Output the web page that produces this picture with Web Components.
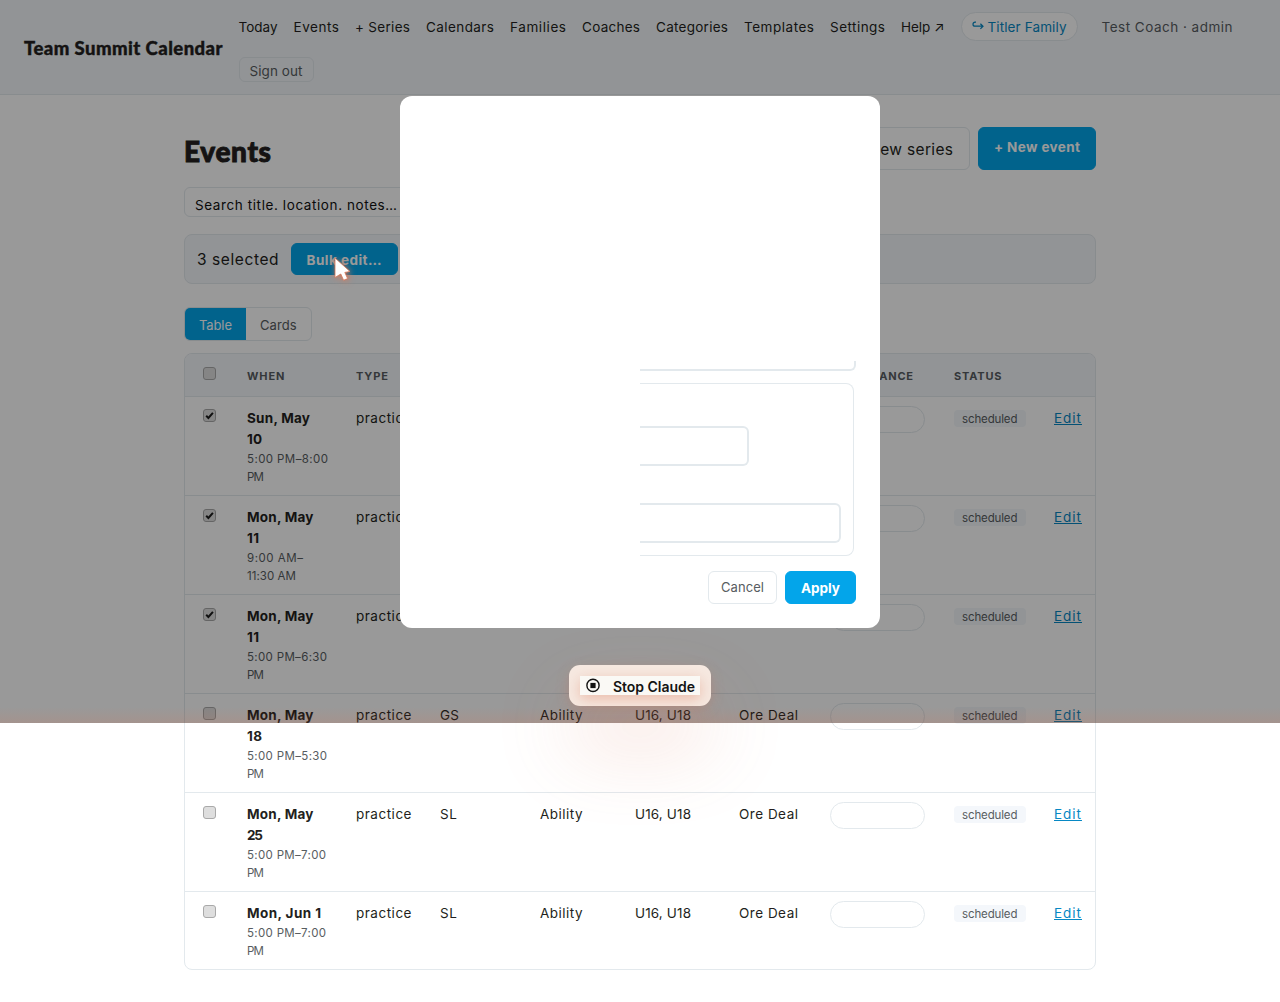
<!DOCTYPE html>
<html lang="en">
<head>
<meta charset="utf-8">
<title>Events</title>
<style>
  html, body {
    margin: 0;
    padding: 0;
    background: #fff;
  }
  body {
    --ink: #231f20;
    --muted: #585d61;
    --line: #e3e9ed;
    --soft: #f4f7fb;
    --blue: #03a5ea;
    --link: #0788c4;
    font: 13.5px/21px Inter, "Liberation Sans", sans-serif;
    color: var(--ink);
  }
</style>
</head>
<body>
<team-app></team-app>

<script>
customElements.define('team-header', class TeamHeader extends HTMLElement {
  constructor() {
    super();
    this.attachShadow({mode: 'open'});
    this.shadowRoot.innerHTML = this.template;
  }
  get template() {
    return `<style>
      :host {
        display: flex;
        align-items: center;
        gap: 16px;
        box-sizing: border-box;
        height: 95px;
        padding: 0 24px;
        background: var(--soft);
        border-bottom: 1px solid var(--line);
      }
      .brand {
        font: 900 18.5px/24px Lato, sans-serif;
        -webkit-text-stroke: .4px currentColor;
        padding-top: 2px;
      }
      nav {
        display: flex;
        flex-wrap: wrap;
        align-items: center;
        row-gap: 16px;
        column-gap: 16px;
        flex: 1;
      }
      nav > fit-text {
        padding-top: 1px;
      }
      .pill {
        box-sizing: border-box;
        width: 117px;
        height: 29px;
        padding: 4px 0 0 10px;
        border: 1px solid var(--line);
        border-radius: 15px;
        background: #fff;
        color: var(--link);
        display: flex;
        gap: 4px;
      }
      .pill svg {
        margin-top: 4px;
      }
      .user {
        margin-left: 8px;
        color: var(--muted);
      }
      .out {
        box-sizing: border-box;
        width: 75px;
        height: 25px;
        padding: 3px 0 0 10px;
        border: 1px solid var(--line);
        border-radius: 6px;
        color: var(--muted);
      }
    </style>
    <fit-text class="brand" width="198.5">Team Summit Calendar</fit-text>
    <nav>
      <fit-text width="39">Today</fit-text>
      <fit-text width="45.5">Events</fit-text>
      <fit-text width="55">+ Series</fit-text>
      <fit-text width="68">Calendars</fit-text>
      <fit-text width="56">Families</fit-text>
      <fit-text width="58">Coaches</fit-text>
      <fit-text width="72">Categories</fit-text>
      <fit-text width="70">Templates</fit-text>
      <fit-text width="55">Settings</fit-text>
      <fit-text width="43.5">Help ↗</fit-text>
      <span class="pill">
        <svg width="12" height="11" viewBox="0 0 12 11" fill="none" stroke="currentColor" stroke-width="1.2"><path d="M4 1.2H3a2 2 0 0 0-2 2v0a2 2 0 0 0 2 2h8M8.4 2.7 11 5.2 8.4 7.8"/></svg>
        <fit-text width="79">Titler Family</fit-text>
      </span>
      <fit-text class="user" width="131">Test Coach · admin</fit-text>
      <span class="out"><fit-text width="53">Sign out</fit-text></span>
    </nav>
    `
  }
});

customElements.define('ui-button', class UiButton extends HTMLElement {
  constructor() {
    super();
    this.attachShadow({mode: 'open'});
    this.shadowRoot.innerHTML = this.template;
  }
  get template() {
    return `<style>
      :host {
        display: flex;
        align-items: center;
        justify-content: center;
        box-sizing: border-box;
        border: 1px solid var(--line);
        border-radius: 6px;
        background: #fff;
        flex: none;
      }
      :host([primary]) {
        background: var(--blue);
        border-color: var(--blue);
        color: #fff;
        font-weight: 700;
      }
    </style>
    <slot></slot>
    `
  }
});

customElements.define('check-box', class CheckBox extends HTMLElement {
  constructor() {
    super();
    this.attachShadow({mode: 'open'});
    this.shadowRoot.innerHTML = this.template;
  }
  get template() {
    return `<style>
      :host {
        display: block;
        box-sizing: border-box;
        width: 13px;
        height: 13px;
        border: 1px solid #a9a9a9;
        border-radius: 3px;
        background: #dedede;
      }
      svg {
        display: none;
      }
      :host([checked]) svg {
        display: block;
      }
    </style>
    <svg width="11" height="11" viewBox="0 0 11 11" fill="none" stroke="#1c1c1c" stroke-width="2"><path d="M2.2 5.8 4.4 8 8.9 2.9"/></svg>
    `
  }
});

customElements.define('events-table', class EventsTable extends HTMLElement {
  constructor() {
    super();
    this.attachShadow({mode: 'open'});
    this.shadowRoot.innerHTML = this.template;
  }
  get rows() {
    return [
      {day: [['Sun, May', 63], ['10', 15]], time: [['5:00 PM–8:00', 81], ['PM', 17]], checked: true},
      {day: [['Mon, May', 66.5], ['11', 12]], time: [['9:00 AM–', 56], ['11:30 AM', 49]], checked: true},
      {day: [['Mon, May', 66.5], ['11', 12]], time: [['5:00 PM–6:30', 80], ['PM', 17]], checked: true},
      {day: [['Mon, May', 66.5], ['18', 15]], time: [['5:00 PM–5:30', 80], ['PM', 17]], kind: ['GS', 19]},
      {day: [['Mon, May', 66.5], ['25', 16]], time: [['5:00 PM–7:00', 79], ['PM', 17]], kind: ['SL', 17]},
      {day: [['Mon, Jun 1', 74]], time: [['5:00 PM–7:00', 79], ['PM', 17]], kind: ['SL', 17]}
    ];
  }
  line([text, width]) {
    return `<fit-text width="${width}">${text}</fit-text>`;
  }
  row(item) {
    return `<div class="row">
      <check-box ${item.checked ? 'checked' : ''}></check-box>
      <div>
        <div class="day">${item.day.map(this.line).join('')}</div>
        <div class="time">${item.time.map(this.line).join('')}</div>
      </div>
      <fit-text width="55.5">practice</fit-text>
      ${item.kind ? this.line(item.kind) : '<i></i>'}
      ${item.kind ? this.line(['Ability', 42.5]) : '<i></i>'}
      ${item.kind ? this.line(['U16, U18', 56]) : '<i></i>'}
      ${item.kind ? this.line(['Ore Deal', 59]) : '<i></i>'}
      <span class="bar"></span>
      <span class="tag"><fit-text width="55.5">scheduled</fit-text></span>
      <a><fit-text width="27">Edit</fit-text></a>
    </div>`;
  }
  get template() {
    return `<style>
      :host {
        display: block;
        box-sizing: border-box;
        height: 617px;
        border: 1px solid var(--line);
        border-radius: 8px;
        overflow: hidden;
      }
      .head, .row {
        display: grid;
        grid-template-columns: 44px 109px 84px 100px 95px 104px 91px 124px 100px 1fr;
        align-items: start;
        box-sizing: border-box;
        padding-left: 18px;
        border-bottom: 1px solid var(--line);
      }
      .head {
        height: 43px;
        padding-top: 13px;
        background: var(--soft);
        color: var(--muted);
        font: 700 11px/18px Inter, sans-serif;
      }
      .row {
        height: 99px;
        padding-top: 11px;
      }
      .row:last-child {
        border-bottom: 0;
      }
      .row check-box {
        margin-top: 1px;
      }
      .row + .row check-box {
        margin-top: 2px;
      }
      .day, .time {
        display: flex;
        flex-direction: column;
      }
      .day {
        font-weight: 700;
      }
      .time {
        font-size: 11.5px;
        line-height: 18px;
        color: var(--muted);
      }
      .bar {
        box-sizing: border-box;
        width: 95px;
        height: 27px;
        margin-top: -2px;
        border: 1px solid var(--line);
        border-radius: 14px;
      }
      .tag {
        box-sizing: border-box;
        width: 72px;
        height: 17px;
        margin-top: 2px;
        padding-left: 8px;
        border-radius: 4px;
        background: var(--soft);
        color: var(--muted);
        font-size: 11.5px;
        line-height: 18px;
      }
      a {
        color: var(--link);
      }
      a fit-text {
        text-decoration: underline;
      }
    </style>
    <div class="head">
      <check-box></check-box>
      <fit-text width="37.5">WHEN</fit-text>
      <fit-text width="32">TYPE</fit-text>
      <i></i><i></i><i></i><i></i>
      <fit-text width="83">ATTENDANCE</fit-text>
      <fit-text width="47.5">STATUS</fit-text>
    </div>
    ${this.rows.map(item => this.row(item)).join('')}
    `
  }
});

customElements.define('events-page', class EventsPage extends HTMLElement {
  constructor() {
    super();
    this.attachShadow({mode: 'open'});
    this.shadowRoot.innerHTML = this.template;
  }
  get template() {
    return `<style>
      :host {
        display: flex;
        flex-direction: column;
        width: 912px;
        margin: 0 auto;
        padding-top: 32px;
      }
      .top {
        display: flex;
        gap: 8px;
        height: 43px;
      }
      h1 {
        flex: 1;
        margin: 0;
        padding-top: 6px;
        font: 900 28px/36px Lato, sans-serif;
        -webkit-text-stroke: .9px currentColor;
      }
      .series {
        width: 134px;
        font-size: 15.5px;
        padding-top: 2px;
      }
      .event {
        width: 118px;
        padding-bottom: 3px;
      }
      .search {
        box-sizing: border-box;
        width: 260px;
        height: 30px;
        margin-top: 17px;
        padding: 7px 10px 0;
        border: 1px solid var(--line);
        border-radius: 6px;
        color: #111;
      }
      .bulk {
        display: flex;
        align-items: center;
        gap: 12px;
        box-sizing: border-box;
        height: 50px;
        margin-top: 17px;
        padding: 0 12px;
        border: 1px solid var(--line);
        border-radius: 8px;
        background: var(--soft);
      }
      .bulk > fit-text {
        font-size: 15.5px;
        padding-top: 1px;
      }
      .bulk ui-button {
        width: 107px;
        height: 32px;
        padding-top: 3px;
        margin-bottom: 1px;
      }
      .toggle {
        display: flex;
        box-sizing: border-box;
        width: 128px;
        height: 34px;
        margin: 23px 0 12px;
        border: 1px solid var(--line);
        border-radius: 6px;
        overflow: hidden;
        color: var(--muted);
        font-size: 13px;
      }
      .toggle span {
        box-sizing: border-box;
        padding: 7px 0 0 14px;
      }
      .toggle .on {
        width: 61px;
        background: var(--blue);
        color: #fff;
      }
    </style>
    <div class="top">
      <h1><fit-text width="87">Events</fit-text></h1>
      <ui-button class="series"><fit-text width="100">+ New series</fit-text></ui-button>
      <ui-button class="event" primary><fit-text width="86">+ New event</fit-text></ui-button>
    </div>
    <div class="search"><fit-text width="202">Search title. location. notes…</fit-text></div>
    <div class="bulk">
      <fit-text width="81.5">3 selected</fit-text>
      <ui-button primary><fit-text width="75">Bulk edit…</fit-text></ui-button>
    </div>
    <div class="toggle">
      <span class="on"><fit-text width="33">Table</fit-text></span>
      <span><fit-text width="36.5">Cards</fit-text></span>
    </div>
    <events-table></events-table>
    `
  }
});

customElements.define('bulk-dialog', class BulkDialog extends HTMLElement {
  constructor() {
    super();
    this.attachShadow({mode: 'open'});
    this.shadowRoot.innerHTML = this.template;
  }
  get template() {
    return `<style>
      :host {
        display: flex;
        flex-direction: column;
        justify-content: flex-end;
        box-sizing: border-box;
        width: 480px;
        height: 532px;
        padding: 24px;
        border-radius: 12px;
        background: #fff;
      }
      .fields {
        display: flex;
        flex-direction: column;
        align-self: flex-end;
        width: 216px;
      }
      .field {
        box-sizing: border-box;
        border: 2px solid var(--line);
        border-left: 0;
        border-radius: 0 6px 6px 0;
        height: 40px;
      }
      .field.cut {
        height: 10px;
        border-top: 0;
        border-radius: 0 0 6px 0;
      }
      .group {
        display: flex;
        flex-direction: column;
        gap: 37px;
        box-sizing: border-box;
        width: 214px;
        height: 173px;
        margin-top: 12px;
        padding: 42px 12px 0 0;
        border: 1px solid var(--line);
        border-left: 0;
        border-radius: 0 8px 8px 0;
      }
      .short {
        width: 109px;
      }
      footer {
        display: flex;
        justify-content: flex-end;
        gap: 8px;
        margin-top: 15px;
      }
      ui-button {
        height: 33px;
        padding-top: 1px;
      }
      .cancel {
        width: 69px;
        color: var(--muted);
        font-size: 13px;
      }
      .apply {
        width: 71px;
        padding-top: 3px;
      }
    </style>
    <div class="fields">
      <div class="field cut"></div>
      <div class="group">
        <div class="field short"></div>
        <div class="field"></div>
      </div>
    </div>
    <footer>
      <ui-button class="cancel"><fit-text width="43">Cancel</fit-text></ui-button>
      <ui-button class="apply" primary><fit-text width="39">Apply</fit-text></ui-button>
    </footer>
    `
  }
});

customElements.define('stop-button', class StopButton extends HTMLElement {
  constructor() {
    super();
    this.attachShadow({mode: 'open'});
    this.shadowRoot.innerHTML = this.template;
  }
  get template() {
    return `<style>
      :host {
        display: flex;
        box-sizing: border-box;
        width: 142px;
        height: 41px;
        padding: 11px;
        border-radius: 11px;
        background: #f6e9e1;
        box-shadow: 0 40px 80px rgba(217, 119, 87, .24), 0 4px 14px rgba(217, 119, 87, .24);
        color: #141413;
        font: 600 14px/22px Inter, sans-serif;
      }
      .box {
        display: flex;
        gap: 12px;
        width: 114px;
        height: 19px;
        padding-left: 6px;
        background: #faf9f5;
        box-shadow: 0 4px 14px rgba(217, 119, 87, .4);
      }
      svg {
        margin-top: 2px;
      }
    </style>
    <div class="box">
      <svg width="15" height="15" viewBox="0 0 15 15"><circle cx="7" cy="7.4" r="6.1" fill="none" stroke="#141413" stroke-width="1.4"/><rect x="4.4" y="4.9" width="5.2" height="5.2" fill="#141413"/></svg>
      <fit-text width="82">Stop Claude</fit-text>
    </div>
    `
  }
});

customElements.define('team-app', class TeamApp extends HTMLElement {
  constructor() {
    super();
    this.attachShadow({mode: 'open'});
    this.shadowRoot.innerHTML = this.template;
  }
  get template() {
    return `<style>
      :host {
        display: block;
        position: relative;
        height: 1002px;
        overflow: hidden;
      }
      .shade {
        position: absolute;
        inset: 0 0 auto 0;
        height: 723px;
        background: linear-gradient(to top, rgba(217, 119, 87, .17), rgba(217, 119, 87, 0) 16px), rgba(0, 0, 0, .4);
      }
      bulk-dialog {
        position: absolute;
        left: 400px;
        top: 95.6px;
      }
      stop-button {
        position: absolute;
        left: 569px;
        top: 665px;
      }
      .cursor {
        position: absolute;
        left: 328px;
        top: 251px;
        overflow: visible;
        filter: drop-shadow(1px 1px 3px rgba(217, 119, 87, .9));
      }
    </style>
    <team-header></team-header>
    <events-page></events-page>
    <div class="shade"></div>
    <bulk-dialog></bulk-dialog>
    <stop-button></stop-button>
    <svg class="cursor" width="28" height="34" viewBox="0 0 28 34"><path d="M7 7 22 20.5 16.8 21.4 19.6 27.6 15.6 29.2 12.8 23 7 26.5Z" fill="#fff" stroke="#d97757" stroke-width=".8"/></svg>
    `
  }
});

// spreads the letters of a single line over the given width
customElements.define('fit-text', class FitText extends HTMLElement {
  constructor() {
    super();
    this.attachShadow({mode: 'open'});
    this.shadowRoot.innerHTML = this.template;
  }
  connectedCallback() {
    const span = this.shadowRoot.querySelector('span');
    const width = Number(this.getAttribute('width'));
    const spacing = (width - span.getBoundingClientRect().width) / (this.textContent.length - 1);
    span.style.letterSpacing = `${spacing}px`;
    this.style.width = `${width}px`;
  }
  get template() {
    return `<style>
      :host {
        display: block;
        flex: none;
        white-space: nowrap;
      }
    </style>
    <span><slot></slot></span>
    `
  }
});
</script>
</body>
</html>
